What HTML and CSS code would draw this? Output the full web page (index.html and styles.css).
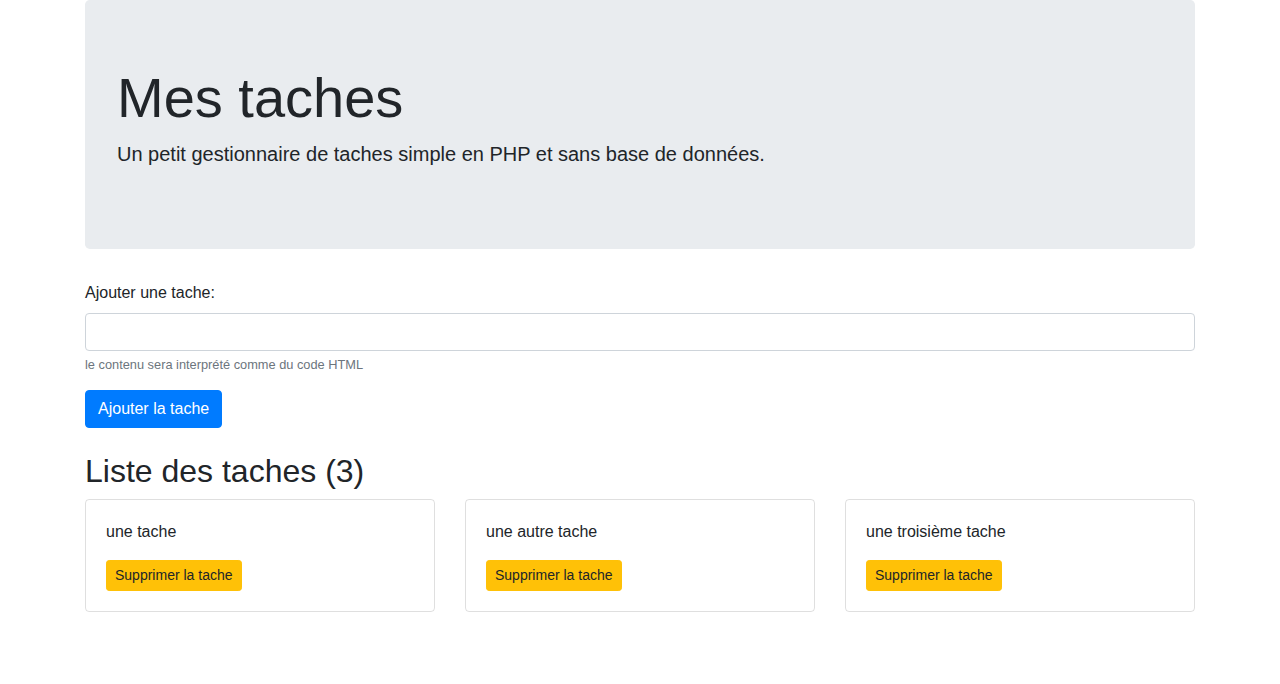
FILE: index.html
```html
<!DOCTYPE html>
<html lang="fr">
<head>
<meta charset="utf-8">
<title>Mes taches</title>
<link rel="stylesheet" href="styles.css">
</head>
<body>
<div class="container">
  <div class="jumbotron">
    <h1 class="display">Mes taches</h1>
    <p class="lead">Un petit gestionnaire de taches simple en PHP et sans base de données.</p>
  </div>
  <form class="task-form">
    <div class="form-group">
      <label class="label" for="tache">Ajouter une tache:</label>
      <input class="input" id="tache" type="text">
      <small class="help">le contenu sera interprété comme du code HTML</small>
    </div>
    <button type="button" class="btn btn-primary">Ajouter la tache</button>
  </form>
  <h2 class="list-title">Liste des taches (3)</h2>
  <div class="cards">
    <div class="card"><p class="card-text">une tache</p><button type="button" class="btn btn-sm btn-warning">Supprimer la tache</button></div>
    <div class="card"><p class="card-text">une autre tache</p><button type="button" class="btn btn-sm btn-warning">Supprimer la tache</button></div>
    <div class="card"><p class="card-text">une troisième tache</p><button type="button" class="btn btn-sm btn-warning">Supprimer la tache</button></div>
  </div>
</div>
</body>
</html>
```
FILE: styles.css
```css
* { box-sizing: border-box; }
body {
  margin: 0;
  font-family: "Liberation Sans", Arial, sans-serif;
  font-size: 16px;
  line-height: 1.5;
  color: #212529;
  background: #fff;
}
.container {
  width: 1140px;
  margin: 0 auto;
  padding: 0 15px;
}
.jumbotron {
  background: #e9ecef;
  border-radius: 4.8px;
  padding: 64px 32px;
  margin-bottom: 32px;
}
.display {
  font-size: 56px;
  font-weight: 300;
  line-height: 1.2;
  margin: 0 0 8px;
}
.lead {
  font-size: 20px;
  font-weight: 300;
  margin: 0 0 16px;
}
.form-group { margin-bottom: 16px; }
.label { display: inline-block; margin-bottom: 8px; }
.input {
  display: block;
  width: 100%;
  height: 38px;
  padding: 6px 12px;
  font: inherit;
  border: 1px solid #ced4da;
  border-radius: 4px;
  background: #fff;
}
.help {
  display: block;
  margin-top: 4px;
  font-size: 12.8px;
  color: #6c757d;
}
.task-form { margin-bottom: 24px; }
.btn {
  display: inline-block;
  font-family: inherit;
  font-size: 16px;
  line-height: 1.5;
  padding: 6px 12px;
  border: 1px solid transparent;
  border-radius: 4px;
  cursor: pointer;
}
.btn-primary { background: #007bff; border-color: #007bff; color: #fff; }
.btn-sm { font-size: 14px; padding: 4px 8px; border-radius: 3.2px; }
.btn-warning { background: #ffc107; border-color: #ffc107; color: #212529; }
.list-title {
  font-size: 32px;
  font-weight: 500;
  line-height: 1.2;
  margin: 0 0 8px;
}
.cards {
  display: grid;
  grid-template-columns: repeat(3, 1fr);
  gap: 30px;
}
.card {
  border: 1px solid rgba(0,0,0,.125);
  border-radius: 4px;
  padding: 20px;
}
.card-text { margin: 0 0 16px; }
```
